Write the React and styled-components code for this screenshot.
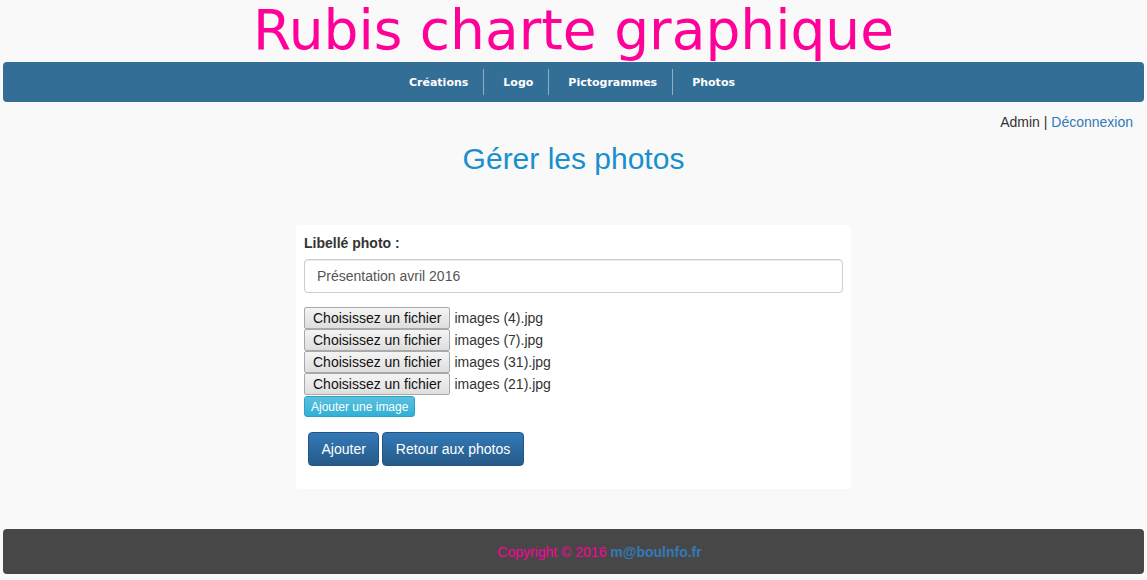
import React from "react";
import styled, { createGlobalStyle } from "styled-components";

const GlobalStyle = createGlobalStyle`
  html, body {
    margin: 0;
    padding: 0;
    background: #f9f9f9;
    font-family: "Liberation Sans", Arial, sans-serif;
    font-size: 14px;
    color: #333;
  }
`;

const Page = styled.div`
  padding: 0 3px 6px;
  display: flex;
  flex-direction: column;
`;

const Title = styled.h1`
  margin: 0;
  height: 62px;
  line-height: 60px;
  text-align: center;
  font-family: "DejaVu Sans", Verdana, sans-serif;
  font-weight: normal;
  font-size: 55px;
  color: #ff0099;
`;

const NavBar = styled.nav`
  height: 40px;
  padding-right: 7px;
  background: #336e96;
  border-radius: 4px;
  display: flex;
  justify-content: center;
  align-items: center;
`;

const NavLink = styled.a`
  color: #fff;
  font-family: "DejaVu Sans", Verdana, sans-serif;
  font-weight: bold;
  font-size: 11px;
  padding: 1px 15px 0 19px;
  line-height: 25px;
  text-decoration: none;
  border-left: ${(p) => (p.$first ? "none" : "1px solid #8eafc6")};
`;

const UserBar = styled.div`
  text-align: right;
  padding: 12px 11px 0 0;
  height: 20px;
  line-height: 16px;
  color: #333;
`;

const Link = styled.a`
  color: #337ab7;
  text-decoration: none;
`;

const Heading = styled.h2`
  margin: 8px 0 0;
  text-align: center;
  font-weight: normal;
  font-size: 30px;
  line-height: 34px;
  color: #1a8fcd;
`;

const Panel = styled.div`
  align-self: center;
  width: 539px;
  margin-top: 49px;
  padding: 8px 8px 23px;
  background: #fff;
  border-radius: 4px;
`;

const Label = styled.label`
  display: block;
  font-weight: bold;
  margin-bottom: 6px;
  line-height: 20px;
`;

const TextInput = styled.div`
  height: 32px;
  border: 1px solid #ccc;
  border-radius: 4px;
  padding: 0 12px;
  line-height: 32px;
  color: #555;
  box-shadow: inset 0 1px 1px rgba(0, 0, 0, 0.075);
`;

const Files = styled.div`
  margin-top: 14px;
  display: flex;
  flex-direction: column;
`;

const FileRow = styled.div`
  display: flex;
  align-items: center;
  height: 22px;
`;

const FileButton = styled.span`
  box-sizing: border-box;
  height: 22px;
  padding: 0 8px;
  line-height: 20px;
  border: 1px solid #a9a9a9;
  border-radius: 2px;
  background: linear-gradient(#f4f4f4, #dedede);
  color: #111;
  margin-right: 4px;
`;

const FileName = styled.span`
  color: #333;
`;

const InfoButton = styled.button`
  align-self: flex-start;
  margin-top: 1px;
  height: 21px;
  padding: 0 6px;
  border: 1px solid #28a4c9;
  border-radius: 3px;
  background: linear-gradient(#5bc0de, #31b0d5);
  color: #fff;
  font-family: "Liberation Sans", Arial, sans-serif;
  font-size: 12px;
`;

const Actions = styled.div`
  display: flex;
  gap: 3px;
  margin: 15px 0 0 4px;
`;

const PrimaryButton = styled.button`
  height: 34px;
  padding: 0 12.5px;
  border: 1px solid #245580;
  border-radius: 4px;
  background: linear-gradient(#337ab7, #265a88);
  color: #fff;
  font-family: "Liberation Sans", Arial, sans-serif;
  font-size: 14px;
`;

const Footer = styled.footer`
  margin-top: 40px;
  height: 45px;
  padding-left: 52px;
  background: #474747;
  border-radius: 4px;
  display: flex;
  justify-content: center;
  align-items: center;
  color: #ff0099;
`;

const Mail = styled.b`
  color: #337ab7;
`;

const files = ["images (4).jpg", "images (7).jpg", "images (31).jpg", "images (21).jpg"];

export default function App() {
  return (
    <>
      <GlobalStyle />
      <Page>
        <Title>Rubis charte graphique</Title>
        <NavBar>
          <NavLink $first>Créations</NavLink>
          <NavLink>Logo</NavLink>
          <NavLink>Pictogrammes</NavLink>
          <NavLink>Photos</NavLink>
        </NavBar>
        <UserBar>
          Admin | <Link>Déconnexion</Link>
        </UserBar>
        <Heading>Gérer les photos</Heading>
        <Panel>
          <Label>Libellé photo :</Label>
          <TextInput>Présentation avril 2016</TextInput>
          <Files>
            {files.map((f) => (
              <FileRow key={f}>
                <FileButton>Choisissez un fichier</FileButton>
                <FileName>{f}</FileName>
              </FileRow>
            ))}
            <InfoButton>Ajouter une image</InfoButton>
          </Files>
          <Actions>
            <PrimaryButton>Ajouter</PrimaryButton>
            <PrimaryButton>Retour aux photos</PrimaryButton>
          </Actions>
        </Panel>
        <Footer>
          Copyright © 2016&nbsp;<Mail>m@boulnfo.fr</Mail>
        </Footer>
      </Page>
    </>
  );
}
